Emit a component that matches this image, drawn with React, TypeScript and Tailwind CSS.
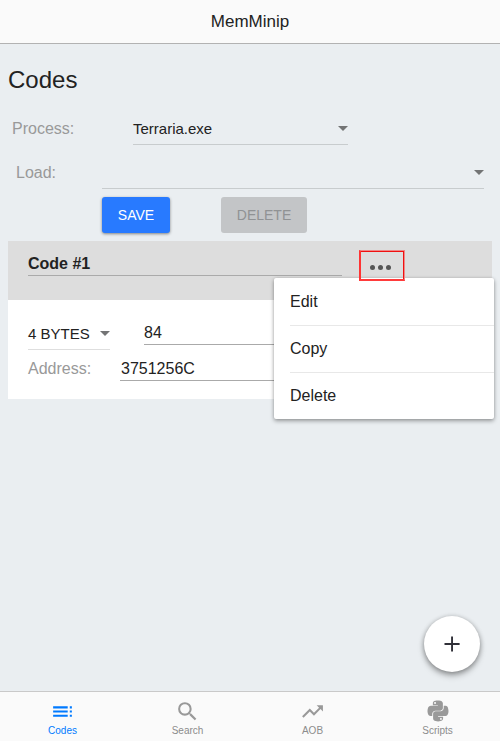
import type { ReactNode } from "react";
import { MdSearch, MdToc, MdTrendingUp } from "react-icons/md";
import { FaPython } from "react-icons/fa";

function Caret() {
  return (
    <span className="block h-0 w-0 shrink-0 border-x-[5px] border-t-[5px] border-x-transparent border-t-[#737475]" />
  );
}

function Tab({ label, active, children }: { label: string; active?: boolean; children: ReactNode }) {
  return (
    <button
      className={`flex flex-1 flex-col items-center pt-[7px] text-[10px] leading-3 ${
        active ? "text-[#007aff]" : "text-[#8c8c8c]"
      }`}
    >
      <span className={`flex h-6 items-center ${active ? "" : "text-[#999]"}`}>{children}</span>
      <span className="mt-[2px]">{label}</span>
    </button>
  );
}

function Menu() {
  return (
    <div className="absolute top-[278px] left-[274px] w-[220px] rounded-[2px] bg-white pl-4 text-[16px] text-[#222] shadow-[0_2px_4px_rgba(0,0,0,0.35),0_0_3px_rgba(0,0,0,0.12)]">
      <div className="h-12 border-b border-[#e8e8e8] leading-[47px]">Edit</div>
      <div className="h-[47px] border-b border-[#e8e8e8] leading-[46px]">Copy</div>
      <div className="h-[46px] leading-[46px]">Delete</div>
    </div>
  );
}

export default function App() {
  return (
    <div className="relative flex h-[741px] w-[500px] flex-col overflow-hidden bg-[#eaeef1] font-['Liberation_Sans',Arial,sans-serif] text-[#222]">
      <header className="h-11 border-b border-[#b2b2b2] bg-[#fafafa] text-center text-[17px] leading-[43px]">
        MemMinip
      </header>

      <main className="flex-1 px-2">
        <h1 className="mt-[22px] h-7 text-[24px] leading-7">Codes</h1>

        <div className="mt-[18px] flex h-[33px] pl-1 text-[#999]">
          <span className="w-[121px] leading-[33px]">Process:</span>
          <div className="flex w-[215px] items-center justify-between border-b border-[#c8ccce] text-[15px] text-[#222]">
            <span className="pt-[2px]">Terraria.exe</span>
            <Caret />
          </div>
        </div>

        <div className="mt-[11px] flex h-[33px] pl-2 text-[#999]">
          <span className="w-[86px] leading-[33px]">Load:</span>
          <div className="flex w-[382px] items-center justify-end border-b border-[#c8ccce]">
            <Caret />
          </div>
        </div>

        <div className="mt-2 flex gap-[51px] pl-[94px] text-[14px]">
          <button className="h-9 w-[68px] rounded-[3px] bg-[#287aff] text-white shadow-[0_1px_3px_rgba(0,0,0,0.45)]">
            SAVE
          </button>
          <button className="h-9 w-[86px] rounded-[3px] bg-[#c3c5c7] text-[#909294]">DELETE</button>
        </div>

        <section className="mt-2 w-[484px] bg-white">
          <div className="flex h-[59px] bg-[#ddd] pt-[10px] pl-5">
            <div className="h-[25px] w-[314px] border-b border-[#aaa] text-[16px] leading-[25px] font-bold">
              Code #1
            </div>
            <button className="ml-7 flex h-[23px] items-end gap-[3px] pb-[4px]">
              <i className="h-[5px] w-[5px] rounded-full bg-[#555]" />
              <i className="h-[5px] w-[5px] rounded-full bg-[#555]" />
              <i className="h-[5px] w-[5px] rounded-full bg-[#555]" />
            </button>
          </div>
          <div className="h-[99px] pt-[18px] pl-5">
            <div className="flex">
              <div className="flex h-[32px] w-[82px] items-center justify-between border-b border-[#dedede] text-[15px]">
                <span className="pt-[2px]">4 BYTES</span>
                <Caret />
              </div>
              <div className="ml-[34px] h-[27px] w-[180px] border-b border-[#aaa] leading-[29px]">84</div>
            </div>
            <div className="flex">
              <span className="w-[92px] pt-[3px] leading-[32px] text-[#999]">Address:</span>
              <div className="h-[31px] w-[200px] border-b border-[#aaa] pl-px leading-[37px]">3751256C</div>
            </div>
          </div>
        </section>
      </main>

      <nav className="flex h-[50px] border-t border-[#c9c9c9] bg-[#fafafa]">
        <Tab label="Codes" active>
          <MdToc size={25} />
        </Tab>
        <Tab label="Search">
          <MdSearch size={25} />
        </Tab>
        <Tab label="AOB">
          <MdTrendingUp size={25} />
        </Tab>
        <Tab label="Scripts">
          <FaPython size={24} />
        </Tab>
      </nav>

      <button className="absolute top-[616px] left-[424px] flex size-14 items-center justify-center rounded-full bg-white shadow-[0_4px_6px_rgba(0,0,0,0.25),0_1px_5px_rgba(0,0,0,0.3)]">
        <svg width="16" height="16" viewBox="0 0 16 16" className="fill-[#303038]">
          <path d="M7.1 .5h1.9v6.6h6.6v1.9H9v6.6H7.1V9H.5V7.1h6.6z" />
        </svg>
      </button>

      <Menu />

      <div className="pointer-events-none absolute top-[250px] left-[359px] h-[31px] w-[46px] border-t border-r border-b-2 border-l-2 border-t-[#ee8888] border-r-[#ee8888] border-b-[#ff3b3b] border-l-[#ff3333] shadow-[inset_-1px_1px_0_#f01010]" />
    </div>
  );
}
